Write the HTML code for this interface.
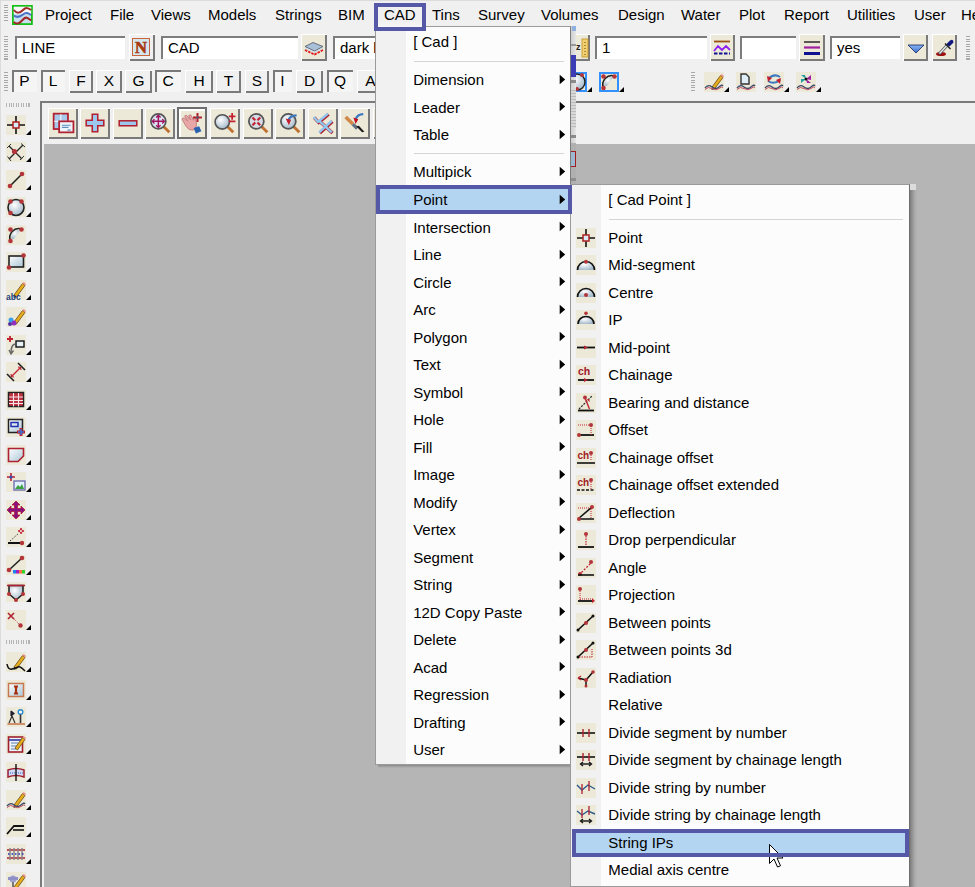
<!DOCTYPE html><html><head><meta charset="utf-8"><style>
*{box-sizing:border-box;margin:0;padding:0}
html,body{width:975px;height:887px;overflow:hidden;background:#f0f0f0;font-family:"Liberation Sans",sans-serif;font-size:15px;color:#000;position:relative}
.a{position:absolute}
.t{position:absolute;white-space:nowrap;line-height:17px}
.raised{position:absolute;background:#f0f0f0;border-top:1px solid #fff;border-left:1px solid #fff;box-shadow:inset -2px -2px 0 #7a7a7a}
.sunk{position:absolute;background:#f5f5f5;box-shadow:inset 2px 2px 0 #7a7a7a}
.field{position:absolute;background:#fff;box-shadow:inset 2px 2px 0 #7d7d7d}
.grip{position:absolute;width:4px;background:repeating-linear-gradient(#a8a8a8 0 1px,#f0f0f0 1px 2.5px)}
.hgrip{position:absolute;height:4px;background:repeating-linear-gradient(90deg,#b4b4b4 0 1px,#f0f0f0 1px 2.5px)}
.ib{position:absolute;width:20px;height:20px;background:#ece9d8}
.tri{position:absolute;width:0;height:0;border-left:5px solid transparent;border-bottom:5px solid #000}
.arr{position:absolute}
svg.a{overflow:visible}
</style></head><body>

<svg width="0" height="0" style="position:absolute"><defs>
<linearGradient id="gl" x1="0" y1="0" x2="1" y2="1"><stop offset="0" stop-color="#ffffff"/><stop offset="1" stop-color="#a9c6d6"/></linearGradient>
<radialGradient id="gs" cx="0.4" cy="0.35" r="0.7"><stop offset="0" stop-color="#ffffff"/><stop offset="1" stop-color="#9fb6c8"/></radialGradient>
<linearGradient id="gb" x1="0" y1="0" x2="0" y2="1"><stop offset="0" stop-color="#8ab6f0"/><stop offset="1" stop-color="#3a6fd0"/></linearGradient>
</defs></svg>
<div class="a" style="left:0;top:0;width:975px;height:1px;background:#dcdcdc"></div>
<div class="a" style="left:0;top:0;width:1px;height:887px;background:#dcdcdc"></div>
<div class="grip" style="left:4px;top:5px;height:17px"></div>
<svg class="a" style="left:12px;top:5px" width="21" height="20" viewBox="0 0 21 20">
<rect x="0.9" y="0.9" width="19" height="18.2" fill="#c8e0ee" stroke="#14c014" stroke-width="1.8"/>
<rect x="1.8" y="1.8" width="17.4" height="7" fill="#f6f6f6"/>
<path d="M1.8 5 C5 9 8 8 11 5 S16 3 19.2 5" stroke="#a02828" stroke-width="2" fill="none"/>
<path d="M1.8 10.5 C5 13 8 12 11 9.5 S16 8 19.2 10" stroke="#4a70c8" stroke-width="2" fill="none"/>
<path d="M1.8 17 C5 20 8 18 11 14.5 S16 13 19.2 15.5" stroke="#a02828" stroke-width="2" fill="none"/>
</svg>
<div class="t" style="left:45px;top:6px">Project</div>
<div class="t" style="left:110px;top:6px">File</div>
<div class="t" style="left:151px;top:6px">Views</div>
<div class="t" style="left:208px;top:6px">Models</div>
<div class="t" style="left:275px;top:6px">Strings</div>
<div class="t" style="left:338px;top:6px">BIM</div>
<div class="t" style="left:384px;top:6px">CAD</div>
<div class="t" style="left:432px;top:6px">Tins</div>
<div class="t" style="left:478px;top:6px">Survey</div>
<div class="t" style="left:541px;top:6px">Volumes</div>
<div class="t" style="left:618px;top:6px">Design</div>
<div class="t" style="left:681px;top:6px">Water</div>
<div class="t" style="left:739px;top:6px">Plot</div>
<div class="t" style="left:784px;top:6px">Report</div>
<div class="t" style="left:847px;top:6px">Utilities</div>
<div class="t" style="left:914px;top:6px">User</div>
<div class="t" style="left:961px;top:6px">Help</div>
<div class="grip" style="left:4px;top:36px;height:24px"></div>
<div class="field" style="left:15px;top:36px;width:110px;height:23px"></div>
<div class="t" style="left:22px;top:39px">LINE</div>
<div class="raised" style="left:129px;top:34px;width:26px;height:27px;background:#f0f0f0"></div>
<svg class="a" style="left:132px;top:38px" width="18" height="18" viewBox="0 0 18 18"><rect x="0.5" y="0.5" width="17" height="17" fill="#d4e6ee" stroke="#c8643c" stroke-width="1"/><text x="9" y="15" text-anchor="middle" font-family="Liberation Serif" font-weight="bold" font-size="16.5" fill="#a83a10" stroke="#a83a10" stroke-width="0.6">N</text></svg>
<div class="field" style="left:161px;top:36px;width:137px;height:23px"></div>
<div class="t" style="left:168px;top:39px">CAD</div>
<div class="raised" style="left:301px;top:34px;width:26px;height:27px;background:#ece9d8"></div>
<svg class="a" style="left:304px;top:38px" width="20" height="20" viewBox="0 0 20 20"><path d="M1 8.5 L9 4.5 L19 8.5 L10.5 13Z" fill="#a8c0d8" stroke="#5a6070" stroke-width="0.9"/><path d="M1 9.5 L10.5 14 L19 9.5 L19 10.5 L10.5 15 L1 10.5Z" fill="#c8dcf0"/><path d="M1 12 L10.5 16.5 L19 12" stroke="#e01818" stroke-width="1.8" fill="none" stroke-dasharray="2.5 1"/></svg>
<div class="field" style="left:333px;top:36px;width:47px;height:23px"></div>
<div class="t" style="left:340px;top:39px">dark l</div>
<div class="raised" style="left:566px;top:34px;width:24px;height:27px;background:#ece9d8"></div>
<svg class="a" style="left:576px;top:38px" width="20" height="20" viewBox="0 0 20 20"><text x="0" y="12" font-family="Liberation Sans" font-weight="bold" font-size="9" fill="#222">z</text><rect x="6" y="1" width="6" height="18" fill="#f0d070" stroke="#c09020" stroke-width="0.8"/><path d="M9 4V5M9 7V8M9 10V11M9 13V14M9 16V17" stroke="#806010" stroke-width="1.2"/></svg>
<div class="field" style="left:595px;top:36px;width:112px;height:23px"></div>
<div class="t" style="left:602px;top:39px">1</div>
<div class="raised" style="left:710px;top:34px;width:25px;height:27px;background:#ece9d8"></div>
<svg class="a" style="left:712px;top:38px" width="20" height="20" viewBox="0 0 20 20"><path d="M2 3.5H18" stroke="#9a5010" stroke-width="1.8"/><path d="M2 13L6 8L10 12L14 8L18 12" stroke="#9020f0" stroke-width="1.8" fill="none"/><path d="M2 15.5H18" stroke="#101090" stroke-width="2.2" stroke-dasharray="3.5 1.5"/></svg>
<div class="field" style="left:740px;top:36px;width:56px;height:23px"></div>
<div class="raised" style="left:799px;top:34px;width:26px;height:27px;background:#ece9d8"></div>
<svg class="a" style="left:802px;top:38px" width="20" height="20" viewBox="0 0 20 20"><path d="M2 4H18" stroke="#333" stroke-width="1.6"/><path d="M2 9.5H18" stroke="#a020a0" stroke-width="2.2"/><path d="M2 15.5H18" stroke="#101090" stroke-width="3"/></svg>
<div class="field" style="left:830px;top:36px;width:70px;height:23px"></div>
<div class="t" style="left:837px;top:39px">yes</div>
<div class="raised" style="left:903px;top:34px;width:25px;height:27px;background:#ece9d8"></div>
<svg class="a" style="left:906px;top:38px" width="20" height="20" viewBox="0 0 20 20"><path d="M2 7H18L10 15Z" fill="url(#gb)" stroke="#102060" stroke-width="0.8"/></svg>
<div class="raised" style="left:932px;top:34px;width:25px;height:27px;background:#ece9d8"></div>
<svg class="a" style="left:935px;top:38px" width="20" height="20" viewBox="0 0 20 20"><ellipse cx="6" cy="16" rx="5" ry="2" fill="#a01010"/><path d="M4 16L12.5 7" stroke="#555" stroke-width="3"/><path d="M4.5 15.5L12.5 7" stroke="#e8eef8" stroke-width="1.4"/><path d="M11 6.5L15 2.5Q18.5 0.5 18.5 4.5L14.5 8.5Z" fill="#101880"/><path d="M10 5.5L15.5 11" stroke="#222" stroke-width="1.4"/></svg>
<div class="grip" style="left:966px;top:36px;height:24px"></div>
<div class="grip" style="left:4px;top:72px;height:19px"></div>
<div class="sunk" style="left:12px;top:70px;width:25px;height:22px;background:#f5f5f5"></div>
<div class="t" style="left:12px;width:25px;text-align:center;top:71.5px;font-size:15.5px">P</div>
<div class="sunk" style="left:41px;top:70px;width:24px;height:22px;background:#f5f5f5"></div>
<div class="t" style="left:41px;width:24px;text-align:center;top:71.5px;font-size:15.5px">L</div>
<div class="raised" style="left:69px;top:70px;width:24px;height:23px;background:#f0f0f0"></div>
<div class="t" style="left:69px;width:24px;text-align:center;top:71.5px;font-size:15.5px">F</div>
<div class="raised" style="left:96px;top:70px;width:26px;height:23px;background:#f0f0f0"></div>
<div class="t" style="left:96px;width:26px;text-align:center;top:71.5px;font-size:15.5px">X</div>
<div class="raised" style="left:125px;top:70px;width:27px;height:23px;background:#f0f0f0"></div>
<div class="t" style="left:125px;width:27px;text-align:center;top:71.5px;font-size:15.5px">G</div>
<div class="sunk" style="left:155px;top:70px;width:26px;height:22px;background:#f5f5f5"></div>
<div class="t" style="left:155px;width:26px;text-align:center;top:71.5px;font-size:15.5px">C</div>
<div class="raised" style="left:185px;top:70px;width:28px;height:23px;background:#f0f0f0"></div>
<div class="t" style="left:185px;width:28px;text-align:center;top:71.5px;font-size:15.5px">H</div>
<div class="raised" style="left:216px;top:70px;width:25px;height:23px;background:#f0f0f0"></div>
<div class="t" style="left:216px;width:25px;text-align:center;top:71.5px;font-size:15.5px">T</div>
<div class="raised" style="left:245px;top:70px;width:24px;height:23px;background:#f0f0f0"></div>
<div class="t" style="left:245px;width:24px;text-align:center;top:71.5px;font-size:15.5px">S</div>
<div class="sunk" style="left:273px;top:70px;width:19px;height:22px;background:#f5f5f5"></div>
<div class="t" style="left:273px;width:19px;text-align:center;top:71.5px;font-size:15.5px">I</div>
<div class="raised" style="left:296px;top:70px;width:27px;height:23px;background:#f0f0f0"></div>
<div class="t" style="left:296px;width:27px;text-align:center;top:71.5px;font-size:15.5px">D</div>
<div class="sunk" style="left:327px;top:70px;width:26px;height:22px;background:#f5f5f5"></div>
<div class="t" style="left:327px;width:26px;text-align:center;top:71.5px;font-size:15.5px">Q</div>
<div class="raised" style="left:357px;top:70px;width:27px;height:23px;background:#f0f0f0"></div>
<div class="t" style="left:357px;width:27px;text-align:center;top:71.5px;font-size:15.5px">A</div>
<div class="a" style="left:575px;top:72px;width:12px;height:20px;background:#ece9d8;border:2px solid #3390ff;border-left:none"></div>
<svg class="a" style="left:575px;top:72px" width="12" height="20" viewBox="0 0 12 20"><circle cx="2" cy="10" r="8" fill="url(#gs)" stroke="#222" stroke-width="1.5"/><circle cx="7" cy="3" r="2" fill="#b3353a"/><circle cx="2" cy="17" r="2" fill="#b3353a"/></svg>
<div class="tri" style="left:587px;top:87px"></div>
<div class="a" style="left:599px;top:72px;width:20px;height:20px;background:#ece9d8;border:2px solid #3390ff"></div>
<svg class="a" style="left:599px;top:72px" width="20" height="20" viewBox="0 0 20 20"><path d="M4.5 16 A9 9 0 0 1 15.5 4" fill="none" stroke="#222" stroke-width="1.6"/><path d="M5.5 14 A7 7 0 0 1 14 5.5 L8 14Z" fill="url(#gs)"/><circle cx="4.5" cy="4.5" r="2.3" fill="#b3353a"/><circle cx="15.5" cy="4.5" r="2.3" fill="#b3353a"/><circle cx="4.5" cy="16" r="2.3" fill="#b3353a"/></svg>
<div class="tri" style="left:619px;top:87px"></div>
<div class="grip" style="left:691px;top:72px;height:19px"></div>
<div class="ib" style="left:704px;top:72px"></div>
<svg class="a" style="left:704px;top:72px" width="20" height="20" viewBox="0 0 20 20"><path d="M8 15 L16.5 3.5 L19 5.5 L10.5 17 Z" fill="#e6ae1e" stroke="#6b4a10" stroke-width="0.8"/><path d="M16.5 3.5 L17.5 2 L20 4 L19 5.5Z" fill="#e89090"/><path d="M8 15 L7.5 18 L10.5 17Z" fill="#333"/><path d="M1 16 Q4 12 8 15 T15 15 T19 14" stroke="#3a4a6a" stroke-width="1.3" fill="none"/><path d="M1 17.5 Q4 14 8 16.5 T15 16.5 T19 15.5" stroke="#c05060" stroke-width="1" fill="none"/></svg>
<div class="tri" style="left:724px;top:87px"></div>
<div class="ib" style="left:736px;top:72px"></div>
<svg class="a" style="left:736px;top:72px" width="20" height="20" viewBox="0 0 20 20"><path d="M5 2H10L13 5V12H5Z" fill="#e0eef8" stroke="#333" stroke-width="1.4"/><path d="M1 16 Q4 12 8 15 T15 15 T19 14" stroke="#3a4a6a" stroke-width="1.3" fill="none"/><path d="M1 17.5 Q4 14 8 16.5 T15 16.5 T19 15.5" stroke="#c05060" stroke-width="1" fill="none"/></svg>
<div class="ib" style="left:764px;top:72px"></div>
<svg class="a" style="left:764px;top:72px" width="20" height="20" viewBox="0 0 20 20"><path d="M4 7 Q10 1 16 5" stroke="#3a78c0" stroke-width="2" fill="none"/><path d="M16 8 Q10 13 4 9" stroke="#3a78c0" stroke-width="2" fill="none"/><path d="M3 4L8 6L4 10Z" fill="#c02030"/><path d="M17 6L12 8L16 12Z" fill="#c02030"/><path d="M1 16 Q4 12 8 15 T15 15 T19 14" stroke="#3a4a6a" stroke-width="1.3" fill="none"/><path d="M1 17.5 Q4 14 8 16.5 T15 16.5 T19 15.5" stroke="#c05060" stroke-width="1" fill="none"/></svg>
<div class="tri" style="left:784px;top:87px"></div>
<div class="ib" style="left:796px;top:72px"></div>
<svg class="a" style="left:796px;top:72px" width="20" height="20" viewBox="0 0 20 20"><path d="M10 7L5 3H9Z" fill="#20a0a0"/><path d="M10 7L15 3V8Z" fill="#a020a0"/><path d="M10 7L5 11V7Z" fill="#20a0a0"/><path d="M10 7L15 11H11Z" fill="#a020a0"/><circle cx="10" cy="7" r="1.5" fill="#111"/><path d="M1 16 Q4 12 8 15 T15 15 T19 14" stroke="#3a4a6a" stroke-width="1.3" fill="none"/><path d="M1 17.5 Q4 14 8 16.5 T15 16.5 T19 15.5" stroke="#c05060" stroke-width="1" fill="none"/></svg>
<div class="tri" style="left:816px;top:87px"></div>
<div class="hgrip" style="left:6px;top:103px;width:24px"></div>
<div class="hgrip" style="left:6px;top:640px;width:24px"></div>
<div class="ib" style="left:6px;top:115px"></div>
<svg class="a" style="left:6px;top:115px" width="20" height="20" viewBox="0 0 20 20"><path d="M1 10H19M10 1V19" stroke="#111" stroke-width="1.6"/><rect x="7" y="7" width="6" height="6" fill="#d8ecf8" stroke="#b02020" stroke-width="1.5"/></svg>
<div class="tri" style="left:26px;top:130px"></div>
<div class="ib" style="left:6px;top:142px"></div>
<svg class="a" style="left:6px;top:142px" width="20" height="20" viewBox="0 0 20 20"><path d="M3 17L17 3M3 4L16 17" stroke="#222" stroke-width="1.3"/><path d="M1.5 14.5L5 19M15 1.5L19 5M1 6L5 2M14 18L18 14" stroke="#333" stroke-width="1"/><circle cx="8.5" cy="9.5" r="2.6" fill="#b3353a"/></svg>
<div class="tri" style="left:26px;top:157px"></div>
<div class="ib" style="left:6px;top:170px"></div>
<svg class="a" style="left:6px;top:170px" width="20" height="20" viewBox="0 0 20 20"><path d="M4 16L16 4" stroke="#222" stroke-width="1.6"/><circle cx="4" cy="16" r="2.3" fill="#b3353a"/><circle cx="16" cy="4" r="2.3" fill="#b3353a"/></svg>
<div class="tri" style="left:26px;top:185px"></div>
<div class="ib" style="left:6px;top:197px"></div>
<svg class="a" style="left:6px;top:197px" width="20" height="20" viewBox="0 0 20 20"><circle cx="10" cy="10.5" r="8" fill="url(#gs)" stroke="#222" stroke-width="1.6"/><circle cx="4.5" cy="4.5" r="2.3" fill="#b3353a"/><circle cx="15.5" cy="4.5" r="2.3" fill="#b3353a"/><circle cx="4.5" cy="16" r="2.3" fill="#b3353a"/></svg>
<div class="tri" style="left:26px;top:212px"></div>
<div class="ib" style="left:6px;top:225px"></div>
<svg class="a" style="left:6px;top:225px" width="20" height="20" viewBox="0 0 20 20"><path d="M4.5 16 A9 9 0 0 1 15.5 4" fill="none" stroke="#222" stroke-width="1.6"/><path d="M5.5 14 A7 7 0 0 1 14 5.5 L8 14Z" fill="url(#gs)"/><circle cx="4.5" cy="4.5" r="2.3" fill="#b3353a"/><circle cx="15.5" cy="4.5" r="2.3" fill="#b3353a"/><circle cx="4.5" cy="16" r="2.3" fill="#b3353a"/></svg>
<div class="tri" style="left:26px;top:240px"></div>
<div class="ib" style="left:6px;top:252px"></div>
<svg class="a" style="left:6px;top:252px" width="20" height="20" viewBox="0 0 20 20"><rect x="3" y="4" width="14.5" height="11" fill="url(#gl)" stroke="#222" stroke-width="1.6"/><circle cx="17.5" cy="3.5" r="2.3" fill="#b3353a"/><circle cx="3" cy="15.5" r="2.3" fill="#b3353a"/></svg>
<div class="tri" style="left:26px;top:267px"></div>
<div class="ib" style="left:6px;top:280px"></div>
<svg class="a" style="left:6px;top:280px" width="20" height="20" viewBox="0 0 20 20"><path d="M8 15 L16.5 3.5 L19 5.5 L10.5 17 Z" fill="#e6ae1e" stroke="#6b4a10" stroke-width="0.8"/><path d="M16.5 3.5 L17.5 2 L20 4 L19 5.5Z" fill="#e89090"/><path d="M8 15 L7.5 18 L10.5 17Z" fill="#333"/><text x="0" y="19.5" font-family="Liberation Sans" font-size="8.5" font-weight="bold" fill="#1d3f7a">abc</text></svg>
<div class="tri" style="left:26px;top:295px"></div>
<div class="ib" style="left:6px;top:307px"></div>
<svg class="a" style="left:6px;top:307px" width="20" height="20" viewBox="0 0 20 20"><path d="M8 15 L16.5 3.5 L19 5.5 L10.5 17 Z" fill="#e6ae1e" stroke="#6b4a10" stroke-width="0.8"/><path d="M16.5 3.5 L17.5 2 L20 4 L19 5.5Z" fill="#e89090"/><path d="M8 15 L7.5 18 L10.5 17Z" fill="#333"/><circle cx="5" cy="13" r="2.5" fill="#3aa0f0"/><circle cx="8" cy="16" r="2.5" fill="#9030c0"/><circle cx="4" cy="17" r="2" fill="#5030a0"/></svg>
<div class="tri" style="left:26px;top:322px"></div>
<div class="ib" style="left:6px;top:335px"></div>
<svg class="a" style="left:6px;top:335px" width="20" height="20" viewBox="0 0 20 20"><path d="M1 4H7M4 1V7" stroke="#c02030" stroke-width="1.8"/><rect x="10" y="6" width="8" height="6" fill="#e6f2f8" stroke="#111" stroke-width="1.4"/><path d="M9 9 Q5 10 5 18" stroke="#666" stroke-width="1.6" fill="none"/><path d="M3 15L5 19L7.5 15.5" stroke="#666" stroke-width="1.4" fill="none"/></svg>
<div class="tri" style="left:26px;top:350px"></div>
<div class="ib" style="left:6px;top:362px"></div>
<svg class="a" style="left:6px;top:362px" width="20" height="20" viewBox="0 0 20 20"><path d="M1 12L8 19M12 1L19 8" stroke="#222" stroke-width="1.6"/><path d="M6 14L14 6" stroke="#c02030" stroke-width="1.3"/><path d="M5 12L5.5 14.5L8 15M12 5L14.5 5.5L15 8" stroke="#c02030" stroke-width="1.2" fill="none"/></svg>
<div class="tri" style="left:26px;top:377px"></div>
<div class="ib" style="left:6px;top:390px"></div>
<svg class="a" style="left:6px;top:390px" width="20" height="20" viewBox="0 0 20 20"><rect x="2.5" y="2.5" width="15" height="14" fill="#c03040" stroke="#222" stroke-width="1.5"/><path d="M3 7H17M3 10.5H17M3 13.5H17M7.5 3V16.5M12.5 3V16.5" stroke="#f4e8ea" stroke-width="1.1"/></svg>
<div class="tri" style="left:26px;top:405px"></div>
<div class="ib" style="left:6px;top:417px"></div>
<svg class="a" style="left:6px;top:417px" width="20" height="20" viewBox="0 0 20 20"><rect x="2.5" y="2.5" width="14" height="13" fill="url(#gl)" stroke="#222" stroke-width="1.5"/><rect x="5" y="5.5" width="7" height="4" fill="none" stroke="#2030b0" stroke-width="1.5"/><path d="M15 11V19M11 15H19" stroke="#c02030" stroke-width="3"/><path d="M15 12V18M12 15H18" stroke="#3a6fd0" stroke-width="1.5"/></svg>
<div class="tri" style="left:26px;top:432px"></div>
<div class="ib" style="left:6px;top:445px"></div>
<svg class="a" style="left:6px;top:445px" width="20" height="20" viewBox="0 0 20 20"><path d="M2.5 3.5H17.5V11L12 16.5H2.5Z" fill="url(#gl)" stroke="#b02030" stroke-width="1.6"/></svg>
<div class="tri" style="left:26px;top:460px"></div>
<div class="ib" style="left:6px;top:472px"></div>
<svg class="a" style="left:6px;top:472px" width="20" height="20" viewBox="0 0 20 20"><path d="M1 5H9M5 1V9" stroke="#c02030" stroke-width="1.6"/><circle cx="5" cy="5" r="1.6" fill="#3050c0"/><rect x="8" y="9" width="11" height="9" fill="#e0f0ff" stroke="#7070b0" stroke-width="1.4"/><path d="M9 17L12 13L14 15L16 12L18 17Z" fill="#3aa040"/></svg>
<div class="tri" style="left:26px;top:487px"></div>
<div class="ib" style="left:6px;top:500px"></div>
<svg class="a" style="left:6px;top:500px" width="20" height="20" viewBox="0 0 20 20"><path d="M10 1L14 5H11.5V8.5H15V6L19 10L15 14V11.5H11.5V15H14L10 19L6 15H8.5V11.5H5V14L1 10L5 6V8.5H8.5V5H6Z" fill="#8a1080" stroke="#b02030" stroke-width="0.8"/></svg>
<div class="tri" style="left:26px;top:515px"></div>
<div class="ib" style="left:6px;top:527px"></div>
<svg class="a" style="left:6px;top:527px" width="20" height="20" viewBox="0 0 20 20"><path d="M2 16H16" stroke="#111" stroke-width="2"/><circle cx="16" cy="16" r="2.2" fill="#b3353a"/><path d="M4 14L13 6" stroke="#333" stroke-width="1" stroke-dasharray="1.5 1.5"/><path d="M12 4H18M15 1V7" stroke="#c02030" stroke-width="1.5"/><circle cx="15" cy="4" r="1.5" fill="#fff" stroke="#c02030"/></svg>
<div class="tri" style="left:26px;top:542px"></div>
<div class="ib" style="left:6px;top:555px"></div>
<svg class="a" style="left:6px;top:555px" width="20" height="20" viewBox="0 0 20 20"><path d="M3 15L16 3" stroke="#222" stroke-width="1.6"/><circle cx="3" cy="15" r="2.3" fill="#b3353a"/><circle cx="16" cy="3" r="2.3" fill="#b3353a"/><rect x="7" y="15" width="3" height="3.5" fill="#2080f0"/><rect x="10" y="15" width="3" height="3.5" fill="#a020c0"/><rect x="13" y="15" width="3" height="3.5" fill="#ff7040"/><rect x="16" y="15" width="3" height="3.5" fill="#30d030"/></svg>
<div class="tri" style="left:26px;top:570px"></div>
<div class="ib" style="left:6px;top:582px"></div>
<svg class="a" style="left:6px;top:582px" width="20" height="20" viewBox="0 0 20 20"><path d="M3 3.5H17L17 12L10 18L3 12Z" fill="url(#gs)" stroke="#222" stroke-width="1.6"/><path d="M1 3.5H19" stroke="#b02030" stroke-width="1.6"/><circle cx="3" cy="12" r="2" fill="#b3353a"/><circle cx="17" cy="12" r="2" fill="#b3353a"/><circle cx="10" cy="18" r="2" fill="#b3353a"/></svg>
<div class="tri" style="left:26px;top:597px"></div>
<div class="ib" style="left:6px;top:610px"></div>
<svg class="a" style="left:6px;top:610px" width="20" height="20" viewBox="0 0 20 20"><path d="M2 3L8 9M8 3L2 9" stroke="#b02030" stroke-width="1.6"/><path d="M8 9L14 15" stroke="#b02030" stroke-width="0.8" stroke-dasharray="1 1"/><circle cx="14.5" cy="15.5" r="2.2" fill="#b3353a"/></svg>
<div class="tri" style="left:26px;top:625px"></div>
<div class="ib" style="left:6px;top:652px"></div>
<svg class="a" style="left:6px;top:652px" width="20" height="20" viewBox="0 0 20 20"><path d="M8 15 L16.5 3.5 L19 5.5 L10.5 17 Z" fill="#e6ae1e" stroke="#6b4a10" stroke-width="0.8"/><path d="M16.5 3.5 L17.5 2 L20 4 L19 5.5Z" fill="#e89090"/><path d="M8 15 L7.5 18 L10.5 17Z" fill="#333"/><path d="M1 12 Q2 18 6 17 T12 15 T19 19" stroke="#111" stroke-width="1.5" fill="none"/></svg>
<div class="tri" style="left:26px;top:667px"></div>
<div class="ib" style="left:6px;top:680px"></div>
<svg class="a" style="left:6px;top:680px" width="20" height="20" viewBox="0 0 20 20"><rect x="2.5" y="3.5" width="15" height="13" fill="url(#gl)" stroke="#c87850" stroke-width="1.5"/><path d="M8 6.5H12M8 13.5H12M10 6.5V13.5" stroke="#a83010" stroke-width="2.2"/></svg>
<div class="tri" style="left:26px;top:695px"></div>
<div class="ib" style="left:6px;top:707px"></div>
<svg class="a" style="left:6px;top:707px" width="20" height="20" viewBox="0 0 20 20"><path d="M5 4V9M5 4L8 6.5L5 9" fill="#223" stroke="#223" stroke-width="1.2"/><path d="M6 9L3 16M6 9L9 16" stroke="#333" stroke-width="1.2"/><circle cx="14.5" cy="5" r="2.3" fill="#fff" stroke="#2a8ad0" stroke-width="1.4"/><path d="M14.5 7.5V16" stroke="#333" stroke-width="1.6"/><path d="M1.5 17H19" stroke="#c87850" stroke-width="1.6"/></svg>
<div class="tri" style="left:26px;top:722px"></div>
<div class="ib" style="left:6px;top:734px"></div>
<svg class="a" style="left:6px;top:734px" width="20" height="20" viewBox="0 0 20 20"><rect x="2.5" y="3" width="14" height="15" fill="#eef4f8" stroke="#a02030" stroke-width="1.6"/><path d="M3 6H16" stroke="#2030a0" stroke-width="1.5"/><path d="M5 9H12M5 12H11M5 15H10" stroke="#6080b0" stroke-width="1"/><path d="M9 14 L16.5 3.5 L19 5.5 L11.5 16 Z" fill="#e6ae1e" stroke="#6b4a10" stroke-width="0.8"/><path d="M16.5 3.5L17.5 2L20 4L19 5.5Z" fill="#e89090"/></svg>
<div class="tri" style="left:26px;top:749px"></div>
<div class="ib" style="left:6px;top:762px"></div>
<svg class="a" style="left:6px;top:762px" width="20" height="20" viewBox="0 0 20 20"><path d="M2 8 Q10 5 18 8 V15 Q10 12 2 15Z" fill="#d0dcf4" stroke="#a02030" stroke-width="1.5"/><path d="M10 2V19" stroke="#111" stroke-width="1.4"/><path d="M2 11H18" stroke="#2030a0" stroke-width="0.8" stroke-dasharray="1 1"/></svg>
<div class="tri" style="left:26px;top:777px"></div>
<div class="ib" style="left:6px;top:790px"></div>
<svg class="a" style="left:6px;top:790px" width="20" height="20" viewBox="0 0 20 20"><path d="M8 15 L16.5 3.5 L19 5.5 L10.5 17 Z" fill="#e6ae1e" stroke="#6b4a10" stroke-width="0.8"/><path d="M16.5 3.5 L17.5 2 L20 4 L19 5.5Z" fill="#e89090"/><path d="M8 15 L7.5 18 L10.5 17Z" fill="#333"/><path d="M1 16 Q4 12 8 15 T15 15 T19 14" stroke="#3a4a6a" stroke-width="1.3" fill="none"/><path d="M1 17.5 Q4 14 8 16.5 T15 16.5 T19 15.5" stroke="#c05060" stroke-width="1" fill="none"/></svg>
<div class="tri" style="left:26px;top:805px"></div>
<div class="ib" style="left:6px;top:817px"></div>
<svg class="a" style="left:6px;top:817px" width="20" height="20" viewBox="0 0 20 20"><path d="M1 17L8 9H18" stroke="#111" stroke-width="1.8" fill="none"/><path d="M7 13H18" stroke="#111" stroke-width="1.6"/></svg>
<div class="tri" style="left:26px;top:832px"></div>
<div class="ib" style="left:6px;top:844px"></div>
<svg class="a" style="left:6px;top:844px" width="20" height="20" viewBox="0 0 20 20"><path d="M1 6H19M1 14H19" stroke="#b02030" stroke-width="1.3"/><path d="M4 4V16M8 4V16M12 4V16M16 4V16" stroke="#888" stroke-width="1.5"/><path d="M2 10H18" stroke="#2030c0" stroke-width="1.4" stroke-dasharray="1.5 2"/></svg>
<div class="tri" style="left:26px;top:859px"></div>
<div class="ib" style="left:6px;top:872px"></div>
<svg class="a" style="left:6px;top:872px" width="20" height="20" viewBox="0 0 20 20"><circle cx="7" cy="7" r="3.5" fill="#a0a0d0"/><rect x="2" y="5" width="10" height="3" fill="#9090c8"/><path d="M7 10V18M4 18H10" stroke="#777" stroke-width="2"/><path d="M8 15 L16.5 3.5 L19 5.5 L10.5 17 Z" fill="#e6ae1e" stroke="#6b4a10" stroke-width="0.8"/><path d="M16.5 3.5 L17.5 2 L20 4 L19 5.5Z" fill="#e89090"/><path d="M8 15 L7.5 18 L10.5 17Z" fill="#333"/></svg>
<div class="tri" style="left:26px;top:887px"></div>
<div class="a" style="left:40px;top:101px;width:935px;height:786px;background:#f0f0f0;border-left:2px solid #7a7a7a;border-top:2px solid #7a7a7a"></div>
<div class="a" style="left:44px;top:144px;width:931px;height:743px;background:#b5b5b5"></div>
<div class="raised" style="left:48px;top:108px;width:30px;height:31px;background:#ece9d8"></div>
<svg class="a" style="left:52px;top:112px" width="22" height="22" viewBox="0 0 20 20"><rect x="1.5" y="1.5" width="13" height="14" fill="#a8c8ec" stroke="#b02030" stroke-width="1.6"/><path d="M8 2V15M2 8.5H14" stroke="#e8f0f8" stroke-width="1.2"/><rect x="6.5" y="8.5" width="13" height="10" fill="#eef4fa" stroke="#b02030" stroke-width="1.6"/><path d="M9 12H17M9 14H15M14 16.5H17" stroke="#6090c0" stroke-width="1"/></svg>
<div class="raised" style="left:80px;top:108px;width:30px;height:31px;background:#ece9d8"></div>
<svg class="a" style="left:84px;top:112px" width="22" height="22" viewBox="0 0 20 20"><path d="M7.5 2H12.5V7.5H18V12.5H12.5V18H7.5V12.5H2V7.5H7.5Z" fill="#9cc8f0" stroke="#b02030" stroke-width="1.4"/></svg>
<div class="raised" style="left:113px;top:108px;width:30px;height:31px;background:#ece9d8"></div>
<svg class="a" style="left:117px;top:112px" width="22" height="22" viewBox="0 0 20 20"><rect x="2" y="8" width="16" height="4.5" fill="#9cc8f0" stroke="#b02030" stroke-width="1.4"/></svg>
<div class="raised" style="left:145px;top:108px;width:30px;height:31px;background:#ece9d8"></div>
<svg class="a" style="left:149px;top:112px" width="22" height="22" viewBox="0 0 20 20"><path d="M12.5 12.5L18.5 18.5" stroke="#c07030" stroke-width="2.6"/><circle cx="8.5" cy="8.5" r="6.8" fill="#dde6f0" stroke="#555" stroke-width="1.6"/><path d="M8.5 3.5V13.5M3.5 8.5H13.5" stroke="#a01060" stroke-width="1.4"/><path d="M6.5 5L8.5 3L10.5 5M6.5 12L8.5 14L10.5 12M5 6.5L3 8.5L5 10.5M12 6.5L14 8.5L12 10.5" stroke="#a01060" stroke-width="1.2" fill="none"/></svg>
<div class="a" style="left:177px;top:107px;width:30px;height:32px;background:#ece9d8;border:2px solid #6e6e6e;box-shadow:inset 2px 2px 0 #fff"></div>
<svg class="a" style="left:181px;top:112px" width="22" height="22" viewBox="0 0 20 20"><path d="M1 6.5 Q1.5 5 3 5.5 L6 8 L3.5 4 Q3.5 2.5 5 3 L8.5 7 L7 3.5 Q7.5 2 9 2.8 L11.5 7.5 L11 5 Q12 4 13 5 L14 10 Q14.5 13 13 15 L11 16.5 Q7 17 4.5 13 Z" fill="#e8a6a6" stroke="#b87070" stroke-width="0.7"/><path d="M11.5 14.5L16.5 13L18.5 17.5L13.5 19.5Z" fill="#2a60b0"/><path d="M15 1V9M11 5H19" stroke="#b02030" stroke-width="1.8"/><circle cx="15" cy="5" r="1" fill="#2a6a80"/></svg>
<div class="raised" style="left:210px;top:108px;width:30px;height:31px;background:#ece9d8"></div>
<svg class="a" style="left:214px;top:112px" width="22" height="22" viewBox="0 0 20 20"><path d="M11.5 12.5L17.5 18.5" stroke="#c07030" stroke-width="2.6"/><circle cx="7.5" cy="9" r="6.5" fill="url(#gs)" stroke="#555" stroke-width="1.5"/><path d="M13.5 4H19.5M16.5 1V7M13.5 8.5H19.5" stroke="#c02030" stroke-width="1.6"/></svg>
<div class="raised" style="left:243px;top:108px;width:30px;height:31px;background:#ece9d8"></div>
<svg class="a" style="left:247px;top:112px" width="22" height="22" viewBox="0 0 20 20"><path d="M12.5 12.5L18.5 18.5" stroke="#c07030" stroke-width="2.6"/><circle cx="8.5" cy="8.5" r="6.8" fill="#d6dce6" stroke="#555" stroke-width="1.6"/><path d="M5 5L7.5 7.5M12 5L9.5 7.5M5 12L7.5 9.5M12 12L9.5 9.5" stroke="#c02030" stroke-width="2"/></svg>
<div class="raised" style="left:275px;top:108px;width:30px;height:31px;background:#ece9d8"></div>
<svg class="a" style="left:279px;top:112px" width="22" height="22" viewBox="0 0 20 20"><path d="M12.5 12.5L18.5 18.5" stroke="#c07030" stroke-width="2.6"/><circle cx="8.5" cy="8.5" r="6.8" fill="url(#gs)" stroke="#555" stroke-width="1.6"/><path d="M8 9 Q9 3 16 3" stroke="#3a78c0" stroke-width="2" fill="none"/><path d="M6 6L9 12L11 7Z" fill="#c02030"/></svg>
<div class="raised" style="left:308px;top:108px;width:30px;height:31px;background:#ece9d8"></div>
<svg class="a" style="left:312px;top:112px" width="22" height="22" viewBox="0 0 20 20"><path d="M1.5 4.5L5.5 9L14.5 1.5M6.5 8L18 18.5M6.5 18.5L18 8" stroke="#b02030" stroke-width="3" fill="none" transform="translate(0.6,0.6)"/><path d="M1.5 4.5L5.5 9L14.5 1.5M6.5 8L18 18.5M6.5 18.5L18 8" stroke="#90c8f0" stroke-width="2.2" fill="none"/></svg>
<div class="raised" style="left:340px;top:108px;width:30px;height:31px;background:#ece9d8"></div>
<svg class="a" style="left:344px;top:112px" width="22" height="22" viewBox="0 0 20 20"><path d="M1.5 4.5L8 11" stroke="#d08848" stroke-width="3.2"/><path d="M8 11L12 15" stroke="#607080" stroke-width="3"/><path d="M11 13L16.5 18.5L18.5 18L13.5 12.5Z" fill="#1a1a1a"/><path d="M10.5 7 Q12 2 17.5 2" stroke="#3a78c0" stroke-width="2" fill="none"/><path d="M8.5 5L10.5 11L13 6.5Z" fill="#c01020"/></svg>
<div class="raised" style="left:373px;top:108px;width:30px;height:31px;background:#ece9d8"></div>
<div class="a" style="left:375px;top:26px;width:196px;height:739px;background:#fcfcfc;border:1px solid #9a9a9a;border-right-color:#7c7c7c"></div>
<div class="a" style="left:376px;top:27px;width:30px;height:737px;background:#f1f1f1"></div>
<div class="a" style="left:378px;top:765px;width:195px;height:3px;background:linear-gradient(#8a8a8a,#b5b5b5)"></div>
<div class="a" style="left:571px;top:26px;width:5px;height:158px;background:linear-gradient(90deg,#cfcfcf,#e6e6e6)"></div>
<div class="a" style="left:572px;top:26px;width:4px;height:5px;background:#8fb0e0"></div>
<div class="a" style="left:571px;top:44px;width:5px;height:2px;background:#9a9a9a"></div>
<div class="a" style="left:571px;top:55px;width:5px;height:22px;background:#3c3cb4"></div>
<div class="a" style="left:571px;top:80px;width:5px;height:3px;background:#8a8a8a"></div>
<div class="a" style="left:571px;top:88px;width:5px;height:40px;background:repeating-linear-gradient(#d8d8d8 0 2px,#bcbcbc 2px 3px)"></div>
<div class="a" style="left:571px;top:135px;width:5px;height:3px;background:#8a8a8a"></div>
<div class="a" style="left:571px;top:143px;width:5px;height:41px;background:#b0b0b0"></div>
<div class="a" style="left:571px;top:151px;width:5px;height:16px;background:#9cb8d0;border-right:1px solid #a02020;border-top:1px solid #a02020;border-bottom:1px solid #a02020"></div>
<div class="a" style="left:571px;top:178px;width:5px;height:3px;background:#8e8e8e"></div>
<div class="a" style="left:414px;top:61px;width:150px;height:1px;background:#d5d5d5"></div>
<div class="a" style="left:414px;top:153px;width:150px;height:1px;background:#d5d5d5"></div>
<div class="t" style="left:413.2px;top:33.4px;">[ Cad ]</div>
<div class="t" style="left:413.2px;top:71.2px;">Dimension</div>
<svg class="a" style="left:559px;top:73.9px" width="8" height="11" viewBox="0 0 8 11"><path d="M0.7 0.8 L6.2 5.5 L0.7 10.2Z" fill="#000"/></svg>
<div class="t" style="left:413.2px;top:98.7px;">Leader</div>
<svg class="a" style="left:559px;top:101.4px" width="8" height="11" viewBox="0 0 8 11"><path d="M0.7 0.8 L6.2 5.5 L0.7 10.2Z" fill="#000"/></svg>
<div class="t" style="left:413.2px;top:126.2px;">Table</div>
<svg class="a" style="left:559px;top:128.9px" width="8" height="11" viewBox="0 0 8 11"><path d="M0.7 0.8 L6.2 5.5 L0.7 10.2Z" fill="#000"/></svg>
<div class="a" style="left:376px;top:185px;width:196px;height:29px;background:#b3d5f1"></div>
<div class="t" style="left:413.2px;top:163.3px;">Multipick</div>
<svg class="a" style="left:559px;top:166.0px" width="8" height="11" viewBox="0 0 8 11"><path d="M0.7 0.8 L6.2 5.5 L0.7 10.2Z" fill="#000"/></svg>
<div class="t" style="left:413.2px;top:191.0px;">Point</div>
<svg class="a" style="left:559px;top:193.7px" width="8" height="11" viewBox="0 0 8 11"><path d="M0.7 0.8 L6.2 5.5 L0.7 10.2Z" fill="#000"/></svg>
<div class="t" style="left:413.2px;top:218.5px;">Intersection</div>
<svg class="a" style="left:559px;top:221.2px" width="8" height="11" viewBox="0 0 8 11"><path d="M0.7 0.8 L6.2 5.5 L0.7 10.2Z" fill="#000"/></svg>
<div class="t" style="left:413.2px;top:246.0px;">Line</div>
<svg class="a" style="left:559px;top:248.7px" width="8" height="11" viewBox="0 0 8 11"><path d="M0.7 0.8 L6.2 5.5 L0.7 10.2Z" fill="#000"/></svg>
<div class="t" style="left:413.2px;top:273.5px;">Circle</div>
<svg class="a" style="left:559px;top:276.2px" width="8" height="11" viewBox="0 0 8 11"><path d="M0.7 0.8 L6.2 5.5 L0.7 10.2Z" fill="#000"/></svg>
<div class="t" style="left:413.2px;top:301.0px;">Arc</div>
<svg class="a" style="left:559px;top:303.7px" width="8" height="11" viewBox="0 0 8 11"><path d="M0.7 0.8 L6.2 5.5 L0.7 10.2Z" fill="#000"/></svg>
<div class="t" style="left:413.2px;top:328.5px;">Polygon</div>
<svg class="a" style="left:559px;top:331.2px" width="8" height="11" viewBox="0 0 8 11"><path d="M0.7 0.8 L6.2 5.5 L0.7 10.2Z" fill="#000"/></svg>
<div class="t" style="left:413.2px;top:356.0px;">Text</div>
<svg class="a" style="left:559px;top:358.7px" width="8" height="11" viewBox="0 0 8 11"><path d="M0.7 0.8 L6.2 5.5 L0.7 10.2Z" fill="#000"/></svg>
<div class="t" style="left:413.2px;top:383.5px;">Symbol</div>
<svg class="a" style="left:559px;top:386.2px" width="8" height="11" viewBox="0 0 8 11"><path d="M0.7 0.8 L6.2 5.5 L0.7 10.2Z" fill="#000"/></svg>
<div class="t" style="left:413.2px;top:411.0px;">Hole</div>
<svg class="a" style="left:559px;top:413.7px" width="8" height="11" viewBox="0 0 8 11"><path d="M0.7 0.8 L6.2 5.5 L0.7 10.2Z" fill="#000"/></svg>
<div class="t" style="left:413.2px;top:438.5px;">Fill</div>
<svg class="a" style="left:559px;top:441.2px" width="8" height="11" viewBox="0 0 8 11"><path d="M0.7 0.8 L6.2 5.5 L0.7 10.2Z" fill="#000"/></svg>
<div class="t" style="left:413.2px;top:466.0px;">Image</div>
<svg class="a" style="left:559px;top:468.7px" width="8" height="11" viewBox="0 0 8 11"><path d="M0.7 0.8 L6.2 5.5 L0.7 10.2Z" fill="#000"/></svg>
<div class="t" style="left:413.2px;top:493.5px;">Modify</div>
<svg class="a" style="left:559px;top:496.2px" width="8" height="11" viewBox="0 0 8 11"><path d="M0.7 0.8 L6.2 5.5 L0.7 10.2Z" fill="#000"/></svg>
<div class="t" style="left:413.2px;top:521.0px;">Vertex</div>
<svg class="a" style="left:559px;top:523.7px" width="8" height="11" viewBox="0 0 8 11"><path d="M0.7 0.8 L6.2 5.5 L0.7 10.2Z" fill="#000"/></svg>
<div class="t" style="left:413.2px;top:548.5px;">Segment</div>
<svg class="a" style="left:559px;top:551.2px" width="8" height="11" viewBox="0 0 8 11"><path d="M0.7 0.8 L6.2 5.5 L0.7 10.2Z" fill="#000"/></svg>
<div class="t" style="left:413.2px;top:576.0px;">String</div>
<svg class="a" style="left:559px;top:578.7px" width="8" height="11" viewBox="0 0 8 11"><path d="M0.7 0.8 L6.2 5.5 L0.7 10.2Z" fill="#000"/></svg>
<div class="t" style="left:413.2px;top:603.5px;">12D Copy Paste</div>
<svg class="a" style="left:559px;top:606.2px" width="8" height="11" viewBox="0 0 8 11"><path d="M0.7 0.8 L6.2 5.5 L0.7 10.2Z" fill="#000"/></svg>
<div class="t" style="left:413.2px;top:631.0px;">Delete</div>
<svg class="a" style="left:559px;top:633.7px" width="8" height="11" viewBox="0 0 8 11"><path d="M0.7 0.8 L6.2 5.5 L0.7 10.2Z" fill="#000"/></svg>
<div class="t" style="left:413.2px;top:658.5px;">Acad</div>
<svg class="a" style="left:559px;top:661.2px" width="8" height="11" viewBox="0 0 8 11"><path d="M0.7 0.8 L6.2 5.5 L0.7 10.2Z" fill="#000"/></svg>
<div class="t" style="left:413.2px;top:686.0px;">Regression</div>
<svg class="a" style="left:559px;top:688.7px" width="8" height="11" viewBox="0 0 8 11"><path d="M0.7 0.8 L6.2 5.5 L0.7 10.2Z" fill="#000"/></svg>
<div class="t" style="left:413.2px;top:713.5px;">Drafting</div>
<svg class="a" style="left:559px;top:716.2px" width="8" height="11" viewBox="0 0 8 11"><path d="M0.7 0.8 L6.2 5.5 L0.7 10.2Z" fill="#000"/></svg>
<div class="t" style="left:413.2px;top:741.0px;">User</div>
<svg class="a" style="left:559px;top:743.7px" width="8" height="11" viewBox="0 0 8 11"><path d="M0.7 0.8 L6.2 5.5 L0.7 10.2Z" fill="#000"/></svg>
<div class="a" style="left:570px;top:184px;width:340px;height:703px;background:#fcfcfc;border:1px solid #9a9a9a;border-right-color:#6e6e6e"></div>
<div class="a" style="left:571px;top:185px;width:30px;height:701px;background:#f1f1f1"></div>
<div class="a" style="left:910px;top:190px;width:7px;height:697px;background:linear-gradient(90deg,#7c7c7c,#a6a6a6 60%,#b5b5b5)"></div>
<div class="a" style="left:910px;top:184px;width:6px;height:6px;background:#dcdcdc"></div>
<div class="a" style="left:609px;top:219px;width:294px;height:1px;background:#d5d5d5"></div>
<div class="t" style="left:608.3px;top:191.2px;">[ Cad Point ]</div>
<div class="a" style="left:572px;top:829px;width:337px;height:28px;background:#b3d5f1"></div>
<div class="t" style="left:608.3px;top:228.8px;">Point</div>
<div class="ib" style="left:576px;top:227.8px"></div>
<svg class="a" style="left:576px;top:227.8px" width="20" height="20" viewBox="0 0 20 20"><path d="M1 10H19M10 1V19" stroke="#111" stroke-width="1.6"/><rect x="7" y="7" width="6" height="6" fill="#d8ecf8" stroke="#b02020" stroke-width="1.5"/></svg>
<div class="t" style="left:608.3px;top:256.3px;">Mid-segment</div>
<div class="ib" style="left:576px;top:255.3px"></div>
<svg class="a" style="left:576px;top:255.3px" width="20" height="20" viewBox="0 0 20 20"><path d="M1.5 15 A8.5 8.5 0 0 1 18.5 15" fill="url(#gs)" stroke="#111" stroke-width="1.7"/><circle cx="10" cy="6.8" r="2" fill="#b3353a"/></svg>
<div class="t" style="left:608.3px;top:283.8px;">Centre</div>
<div class="ib" style="left:576px;top:282.8px"></div>
<svg class="a" style="left:576px;top:282.8px" width="20" height="20" viewBox="0 0 20 20"><path d="M1.5 14 A8.5 8.5 0 0 1 18.5 14" fill="url(#gs)" stroke="#111" stroke-width="1.7"/><circle cx="10" cy="12" r="2" fill="#b3353a"/></svg>
<div class="t" style="left:608.3px;top:311.3px;">IP</div>
<div class="ib" style="left:576px;top:310.3px"></div>
<svg class="a" style="left:576px;top:310.3px" width="20" height="20" viewBox="0 0 20 20"><circle cx="10" cy="3.2" r="1.8" fill="#b3353a"/><path d="M2 14 A8 7.5 0 0 1 18 14" fill="url(#gs)" stroke="#111" stroke-width="1.7"/></svg>
<div class="t" style="left:608.3px;top:338.8px;">Mid-point</div>
<div class="ib" style="left:576px;top:337.8px"></div>
<svg class="a" style="left:576px;top:337.8px" width="20" height="20" viewBox="0 0 20 20"><path d="M1 9.5H19" stroke="#111" stroke-width="1.8"/><path d="M8 7.5L12 9.5L8 11.5Z" fill="#b02030"/></svg>
<div class="t" style="left:608.3px;top:366.3px;">Chainage</div>
<div class="ib" style="left:576px;top:365.3px"></div>
<svg class="a" style="left:576px;top:365.3px" width="20" height="20" viewBox="0 0 20 20"><text x="2" y="9.5" font-family="Liberation Sans" font-size="10.5" font-weight="bold" fill="#a01828">ch</text><path d="M2 15H18" stroke="#111" stroke-width="1.8"/><path d="M8 13L12 15L8 17Z" fill="#b02030"/></svg>
<div class="t" style="left:608.3px;top:393.8px;">Bearing and distance</div>
<div class="ib" style="left:576px;top:392.8px"></div>
<svg class="a" style="left:576px;top:392.8px" width="20" height="20" viewBox="0 0 20 20"><path d="M2 17.5H18" stroke="#111" stroke-width="1.8"/><path d="M3 16L16 3" stroke="#222" stroke-width="1.2" stroke-dasharray="2 1.2"/><path d="M9 5L13.5 16" stroke="#c02030" stroke-width="1.4"/><path d="M10.5 6.5L13 6L14 9Z" fill="#c02030"/><circle cx="9" cy="4.5" r="2" fill="#b3353a"/></svg>
<div class="t" style="left:608.3px;top:421.3px;">Offset</div>
<div class="ib" style="left:576px;top:420.3px"></div>
<svg class="a" style="left:576px;top:420.3px" width="20" height="20" viewBox="0 0 20 20"><path d="M2 5H15" stroke="#c02030" stroke-width="1" stroke-dasharray="1 1"/><path d="M2 15H18" stroke="#111" stroke-width="1.8"/><path d="M15 6V15" stroke="#c02030" stroke-width="1" stroke-dasharray="1 1"/><circle cx="15" cy="5" r="2" fill="#b3353a"/><circle cx="3" cy="15" r="2" fill="#b3353a"/></svg>
<div class="t" style="left:608.3px;top:448.8px;">Chainage offset</div>
<div class="ib" style="left:576px;top:447.8px"></div>
<svg class="a" style="left:576px;top:447.8px" width="20" height="20" viewBox="0 0 20 20"><text x="1.5" y="11" font-family="Liberation Sans" font-size="10" font-weight="bold" fill="#a02020">ch</text><path d="M15 7V13" stroke="#c02030" stroke-width="1" stroke-dasharray="1 1"/><circle cx="15" cy="5" r="2" fill="#b3353a"/><path d="M1 15H19" stroke="#111" stroke-width="1.6"/></svg>
<div class="t" style="left:608.3px;top:476.3px;">Chainage offset extended</div>
<div class="ib" style="left:576px;top:475.3px"></div>
<svg class="a" style="left:576px;top:475.3px" width="20" height="20" viewBox="0 0 20 20"><text x="1.5" y="11" font-family="Liberation Sans" font-size="10" font-weight="bold" fill="#a02020">ch</text><path d="M15 7V15" stroke="#c02030" stroke-width="1" stroke-dasharray="1 1"/><circle cx="15" cy="5" r="2" fill="#b3353a"/><path d="M1 15H19" stroke="#111" stroke-width="1.6" stroke-dasharray="3 1.5"/></svg>
<div class="t" style="left:608.3px;top:503.8px;">Deflection</div>
<div class="ib" style="left:576px;top:502.8px"></div>
<svg class="a" style="left:576px;top:502.8px" width="20" height="20" viewBox="0 0 20 20"><path d="M2 5H16" stroke="#c02030" stroke-width="1" stroke-dasharray="1 1"/><path d="M2 16H18M2 16L16 4" stroke="#111" stroke-width="1.6"/><path d="M15 6V15" stroke="#c02030" stroke-width="1" stroke-dasharray="1 1"/><circle cx="16" cy="4" r="2" fill="#b3353a"/><circle cx="3" cy="16" r="2" fill="#b3353a"/></svg>
<div class="t" style="left:608.3px;top:531.3px;">Drop perpendicular</div>
<div class="ib" style="left:576px;top:530.3px"></div>
<svg class="a" style="left:576px;top:530.3px" width="20" height="20" viewBox="0 0 20 20"><circle cx="10" cy="4" r="2" fill="#b3353a"/><path d="M10 6V16" stroke="#c02030" stroke-width="1.2" stroke-dasharray="1.5 1"/><path d="M2 17H18" stroke="#111" stroke-width="1.8"/></svg>
<div class="t" style="left:608.3px;top:558.8px;">Angle</div>
<div class="ib" style="left:576px;top:557.8px"></div>
<svg class="a" style="left:576px;top:557.8px" width="20" height="20" viewBox="0 0 20 20"><path d="M3 17L16 4" stroke="#c02030" stroke-width="1.3" stroke-dasharray="2 1.5"/><circle cx="15" cy="4" r="2" fill="#b3353a"/><circle cx="4" cy="16" r="2" fill="#b3353a"/><path d="M2 17H18" stroke="#111" stroke-width="1.6"/></svg>
<div class="t" style="left:608.3px;top:586.3px;">Projection</div>
<div class="ib" style="left:576px;top:585.3px"></div>
<svg class="a" style="left:576px;top:585.3px" width="20" height="20" viewBox="0 0 20 20"><circle cx="4" cy="4" r="2" fill="#b3353a"/><path d="M4 6V15" stroke="#c02030" stroke-width="1" stroke-dasharray="1 1"/><path d="M2 16H16" stroke="#111" stroke-width="1.8"/><path d="M4 14H16" stroke="#c02030" stroke-width="1" stroke-dasharray="1 1"/><path d="M16 13L19 16L16 18Z" fill="#c02030"/></svg>
<div class="t" style="left:608.3px;top:613.8px;">Between points</div>
<div class="ib" style="left:576px;top:612.8px"></div>
<svg class="a" style="left:576px;top:612.8px" width="20" height="20" viewBox="0 0 20 20"><path d="M2 17L17 3" stroke="#111" stroke-width="1.6"/><circle cx="10" cy="10" r="2" fill="#b3353a"/><circle cx="2" cy="17" r="1.5" fill="#111"/><circle cx="17" cy="3" r="1.5" fill="#111"/></svg>
<div class="t" style="left:608.3px;top:641.3px;">Between points 3d</div>
<div class="ib" style="left:576px;top:640.3px"></div>
<svg class="a" style="left:576px;top:640.3px" width="20" height="20" viewBox="0 0 20 20"><path d="M2 17L17 3" stroke="#111" stroke-width="1.6"/><circle cx="10" cy="10" r="2" fill="#b3353a"/><circle cx="2" cy="17" r="1.5" fill="#111"/><circle cx="17" cy="3" r="1.5" fill="#111"/><path d="M3 17H16V9" stroke="#c02030" stroke-width="1" stroke-dasharray="1.5 1" fill="none"/></svg>
<div class="t" style="left:608.3px;top:668.8px;">Radiation</div>
<div class="ib" style="left:576px;top:667.8px"></div>
<svg class="a" style="left:576px;top:667.8px" width="20" height="20" viewBox="0 0 20 20"><path d="M10 12L17 4M10 12L10 19M10 12L2 10" stroke="#111" stroke-width="1.5"/><circle cx="10" cy="12" r="2" fill="#b3353a"/><circle cx="17" cy="4" r="1.8" fill="#b3353a"/><circle cx="10" cy="18" r="1.5" fill="#b3353a"/><path d="M2 10L5 8M2 10L5 12" stroke="#c02030" stroke-width="1.3"/></svg>
<div class="t" style="left:608.3px;top:696.3px;">Relative</div>
<div class="t" style="left:608.3px;top:723.8px;">Divide segment by number</div>
<div class="ib" style="left:576px;top:722.8px"></div>
<svg class="a" style="left:576px;top:722.8px" width="20" height="20" viewBox="0 0 20 20"><path d="M1 10H19" stroke="#111" stroke-width="1.6"/><path d="M7 6V14M13 6V14" stroke="#b02030" stroke-width="1.4"/></svg>
<div class="t" style="left:608.3px;top:751.3px;">Divide segment by chainage length</div>
<div class="ib" style="left:576px;top:750.3px"></div>
<svg class="a" style="left:576px;top:750.3px" width="20" height="20" viewBox="0 0 20 20"><path d="M1 7H19" stroke="#111" stroke-width="1.6"/><path d="M7 3V11M13 3V11" stroke="#b02030" stroke-width="1.4"/><path d="M5 14H15" stroke="#111" stroke-width="1.4"/><path d="M7 12L4.5 14L7 16M13 12L15.5 14L13 16" stroke="#111" stroke-width="1.3" fill="none"/></svg>
<div class="t" style="left:608.3px;top:778.8px;">Divide string by number</div>
<div class="ib" style="left:576px;top:777.8px"></div>
<svg class="a" style="left:576px;top:777.8px" width="20" height="20" viewBox="0 0 20 20"><path d="M1 7L6 12L12 7L19 11" stroke="#2a5a8a" stroke-width="1.4" fill="none"/><path d="M6 6V16M13 3V13" stroke="#b02030" stroke-width="1.3"/></svg>
<div class="t" style="left:608.3px;top:806.3px;">Divide string by chainage length</div>
<div class="ib" style="left:576px;top:805.3px"></div>
<svg class="a" style="left:576px;top:805.3px" width="20" height="20" viewBox="0 0 20 20"><path d="M1 6L6 10L12 6L19 9" stroke="#2a5a8a" stroke-width="1.4" fill="none"/><path d="M6 4V13M13 1V10" stroke="#b02030" stroke-width="1.3"/><path d="M5 16H15" stroke="#111" stroke-width="1.4"/><path d="M7 14L4.5 16L7 18M13 14L15.5 16L13 18" stroke="#111" stroke-width="1.3" fill="none"/></svg>
<div class="t" style="left:608.3px;top:833.8px;">String IPs</div>
<div class="t" style="left:608.3px;top:861.3px;">Medial axis centre</div>
<svg class="a" style="left:769px;top:844px" width="16" height="25" viewBox="0 0 16 25"><path d="M0.5 0.5 L0.5 19.5 L5 15 L8.5 23 L11.5 21.8 L8 14 L14 14 Z" fill="#fff" stroke="#000" stroke-width="1" stroke-linejoin="miter"/></svg>
<div class="a" style="left:376px;top:185px;width:196px;height:29px;border:4px solid #5558a6"></div>
<div class="a" style="left:572px;top:829px;width:337px;height:28px;border:4px solid #5558a6"></div>
<div class="a" style="left:374px;top:3px;width:52px;height:28px;border:4px solid #5558a6;background:linear-gradient(#f0f0f0 70%,#f6f6f6)"></div>
<div class="t" style="left:384px;top:6px">CAD</div>
